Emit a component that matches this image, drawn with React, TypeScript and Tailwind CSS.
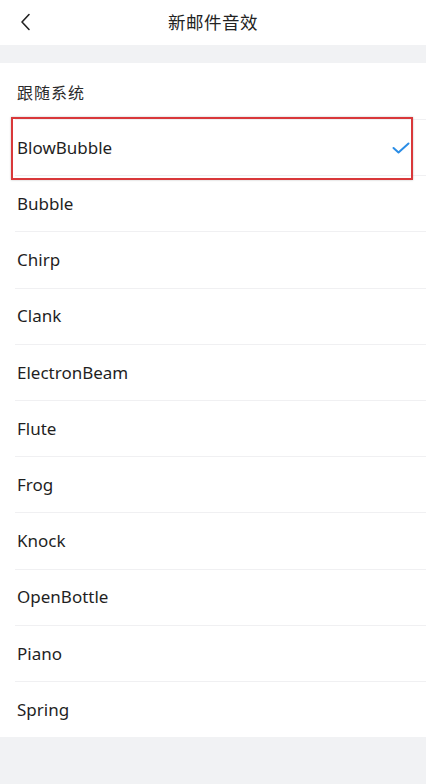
const sounds = [
  'BlowBubble',
  'Bubble',
  'Chirp',
  'Clank',
  'ElectronBeam',
  'Flute',
  'Frog',
  'Knock',
  'OpenBottle',
  'Piano',
  'Spring',
];

export default function App() {
  return (
    <div
      className="w-[430px] h-[784px] bg-white overflow-hidden text-[#1a1a1a]"
      style={{ fontFamily: '"Noto Sans", "Noto Sans CJK SC", sans-serif' }}
    >
      <div className="w-[426px] h-full flex flex-col">
        {/* Header */}
        <div className="relative h-[45px] flex items-center justify-center bg-white">
          <button className="absolute left-[16px] top-[12px] w-[20px] h-[20px] flex items-center justify-center">
            <svg width="14" height="20" viewBox="0 0 14 20" fill="none">
              <path d="M10 2.5 L3 10 L10 17.5" stroke="#222" strokeWidth="1.6" strokeLinecap="round" strokeLinejoin="round" />
            </svg>
          </button>
          <h1 className="text-[17.5px] tracking-[0.5px] text-[#222]">新邮件音效</h1>
        </div>

        <div className="h-[18px] bg-[#f1f2f4]" />

        {/* List */}
        <div className="relative">
          <div className="h-[56px] flex items-center pl-[17px] pt-[3px] text-[16px] tracking-[1px] text-[#2a2a2a]">
            跟随系统
          </div>
          {sounds.map((name, i) => (
            <div key={name} className="h-[56.2px] ml-[15px] flex items-center border-t border-[#f0f0f2]">
              <span className="pl-[2px] text-[17px] text-[#1f1f1f] flex-1">{name}</span>
              {i === 0 && (
                <svg className="mr-[16px]" width="18" height="12" viewBox="0 0 18 12" fill="none">
                  <path d="M1.5 6 L6.5 10.5 L16.5 1.5" stroke="#2b8de6" strokeWidth="2" strokeLinecap="round" strokeLinejoin="round" />
                </svg>
              )}
            </div>
          ))}

          {/* annotation box */}
          <div className="absolute left-[11px] top-[54px] w-[402px] h-[63px] border-2 border-[#d9383a] shadow-[0_0_2px_rgba(0,0,0,0.25)] pointer-events-none" />
        </div>

        <div className="flex-1 bg-[#f1f2f4]" />
      </div>
    </div>
  );
}
